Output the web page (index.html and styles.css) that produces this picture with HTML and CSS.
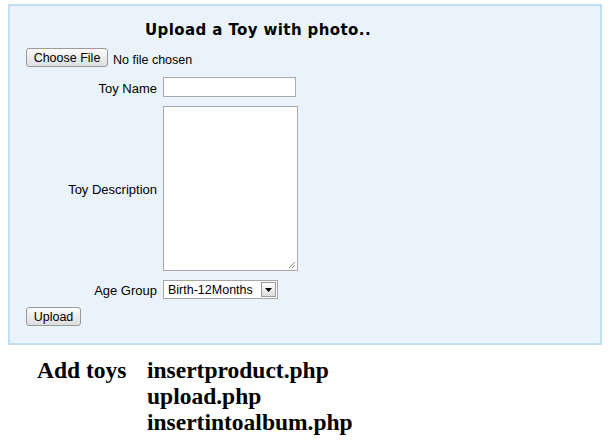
FILE: index.html
```html
<!DOCTYPE html>
<html>
<head>
<meta charset="utf-8">
<link rel="stylesheet" href="styles.css">
</head>
<body>
<div class="box">
  <h2 class="title">Upload a Toy with photo..</h2>
  <div class="file-row">
    <span class="btn">Choose File</span>
    <span class="nofile">No file chosen</span>
  </div>
  <div class="grid">
    <label class="lbl">Toy Name</label>
    <div class="input"></div>
    <label class="lbl">Toy Description</label>
    <div class="textarea">
      <svg class="grip" width="9" height="9" viewBox="0 0 9 9"><path d="M8 2 L2 8 M8 5 L5 8" stroke="#8a8a8a" stroke-width="1" fill="none"/></svg>
    </div>
    <label class="lbl">Age Group</label>
    <div class="select">
      <span class="sel-text">Birth-12Months</span>
      <span class="sel-arrow"><svg width="7" height="4" viewBox="0 0 7 4"><path d="M0 0 H7 L3.5 4 Z" fill="#000"/></svg></span>
    </div>
  </div>
  <div class="upload-row"><span class="btn">Upload</span></div>
</div>
<div class="links">
  <div class="links-label">Add toys</div>
  <div class="links-list">
    <div>insertproduct.php</div>
    <div>upload.php</div>
    <div>insertintoalbum.php</div>
  </div>
</div>
</body>
</html>
```
FILE: styles.css
```css
html, body { margin: 0; padding: 0; background: #fff; }
body { font-family: "Liberation Sans", Arial, sans-serif; font-size: 13px; color: #000; }
.box {
  margin: 4px 0 0 8px;
  width: 594px;
  height: 341px;
  box-sizing: border-box;
  border: 2px solid #c3deef;
  background: #eaf3fb;
  padding: 14px 0 0 16px;
}
.title {
  margin: 0 0 0 119px;
  font-family: "DejaVu Sans", Verdana, sans-serif;
  font-weight: bold;
  font-size: 15px;
  line-height: 18px;
  height: 17px;
  letter-spacing: 0.4px;
  position: relative;
  top: 1px;
}
.file-row { margin-top: 11px; display: flex; align-items: center; height: 19px; }
.btn {
  display: inline-flex; align-items: center; justify-content: center;
  box-sizing: border-box; height: 19px; padding: 0 6px;
  border: 1px solid #9a9a9a; border-radius: 3px;
  background: linear-gradient(#fbfbfb, #dedede);
  font-size: 12.5px; color: #000;
}
.file-row .btn { width: 82px; }
.nofile { margin-left: 5px; font-size: 12.5px; position: relative; top: 2px; }
.grid {
  margin-top: 10px;
  display: grid;
  grid-template-columns: 131px auto;
  column-gap: 6px;
  row-gap: 9px;
  align-items: center;
  justify-items: start;
}
.lbl { justify-self: end; line-height: 15px; position: relative; top: 1px; }
.input { width: 133px; height: 20px; box-sizing: border-box; border: 1px solid #a9a9a9; background: #fff; }
.textarea { width: 135px; height: 165px; box-sizing: border-box; border: 1px solid #a9a9a9; background: #fff; position: relative; }
.grip { position: absolute; right: 1px; bottom: 1px; }
.select {
  width: 115px; height: 19px; box-sizing: border-box; border: 1px solid #a5a5a5; background: #fff;
  display: flex; align-items: center; justify-content: space-between; padding: 0 1px 0 4px;
  font-size: 12.5px;
}
.sel-arrow {
  width: 15px; height: 15px; box-sizing: border-box; border: 1px solid #9a9a9a;
  background: linear-gradient(#fdfdfd, #dcdcdc);
  display: flex; align-items: center; justify-content: center;
}
.upload-row { margin-top: 8px; }
.upload-row .btn { width: 55px; }
.links {
  display: flex;
  margin: 12px 0 0 37px;
  font-family: "Liberation Serif", "Times New Roman", serif;
  font-weight: bold;
  font-size: 23.5px;
  line-height: 26px;
}
.links-label { width: 110px; }
```
